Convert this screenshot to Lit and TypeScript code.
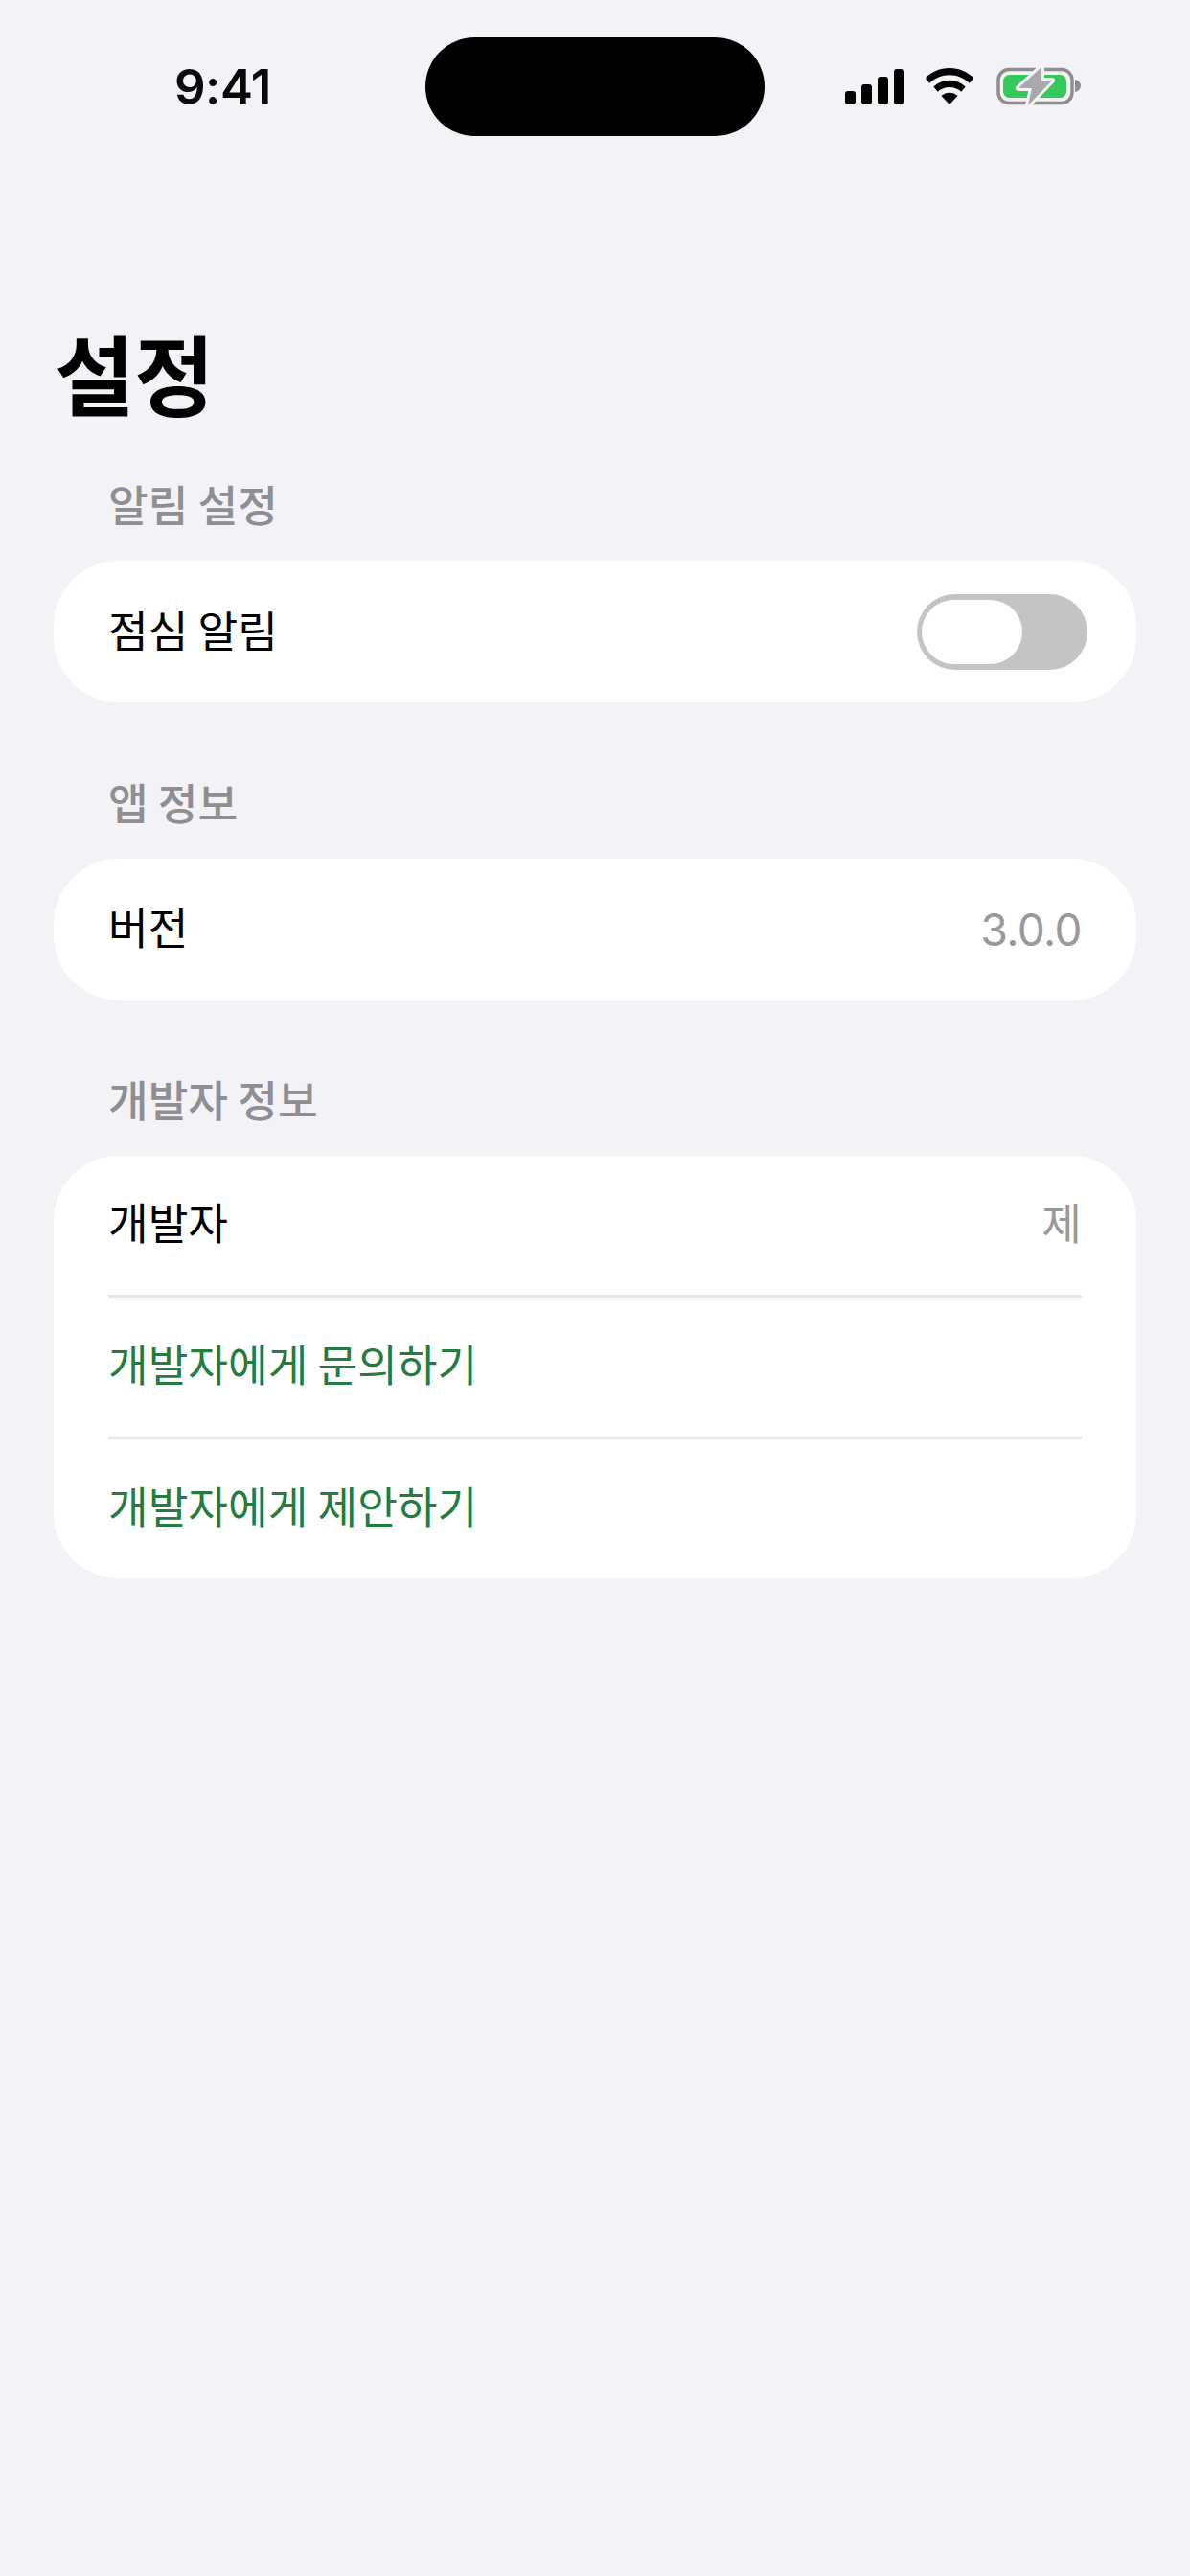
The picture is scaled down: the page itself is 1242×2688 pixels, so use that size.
import { LitElement, html, css } from "lit";
import { customElement } from "lit/decorators.js";

@customElement("app-root")
export class AppRoot extends LitElement {
  static styles = css`
    :host { display: block; width: 1242px; height: 2688px; background: #f2f2f7; font-family: "Noto Sans CJK KR", Inter, sans-serif; color: #000; overflow: hidden; }
    .status { display: flex; align-items: center; height: 103px; padding-top: 39px; }
    .time { width: 444px; box-sizing: border-box; padding-left: 182px; font: 600 51px/1 Inter, sans-serif; color: #0a0a0a; letter-spacing: -0.5px; }
    .island { width: 354px; height: 103px; border-radius: 52px; background: #000; }
    .icons { display: flex; align-items: center; margin-left: 84px; gap: 21px; padding-bottom: 1px; }
    .icons svg { display: block; overflow: visible; }
    .icons .battery { margin-left: 1px; }
    .page { padding: 0 56px; }
    h1 { margin: 186px 0 47px 1px; font-size: 90.6px; line-height: 120px; font-weight: 700; }
    .label { padding-left: 57px; padding-bottom: 4px; font-size: 45.3px; line-height: 60px; font-weight: 500; color: #8e8e93; }
    .section { margin-top: 72.5px; }
    .section.top { margin-top: 0; }
    .card { background: #fff; border-radius: 68px; margin-top: 26px; padding: 0 57px; }
    .row { display: flex; align-items: center; justify-content: space-between; height: 148px; font-size: 45.3px; }
    .row.multi { height: 145px; }
    .text { padding-bottom: 7px; }
    .row.multi .text { padding-bottom: 9px; }
    .sep { height: 3px; background: #e5e5ea; }
    .value { color: #999; }
    .num { font: 400 46px/1 Inter, sans-serif; color: #999; letter-spacing: -0.6px; }
    .green { color: #247c40; }
    .switch { box-sizing: border-box; width: 178px; height: 79px; border-radius: 40px; background: #c4c4c6; padding: 6px 5px; margin-right: -6px; display: flex; }
    .thumb { width: 105px; height: 67px; border-radius: 34px; background: #fff; }
  `;

  render() {
    return html`
      <div class="status">
        <div class="time">9:41</div>
        <div class="island"></div>
        <div class="icons">
          <svg width="61" height="37" viewBox="0 0 61 37">
            <rect x="0" y="23" width="11" height="14" rx="3" fill="#000" />
            <rect x="17" y="16" width="11" height="21" rx="3" fill="#000" />
            <rect x="34" y="8" width="11" height="29" rx="3" fill="#000" />
            <rect x="51" y="0" width="10" height="37" rx="3" fill="#000" />
          </svg>
          <svg width="54" height="38" viewBox="0 0 54 40">
            <path d="M27 0C16.500 0 7.500 4 0.500 11L5 16.500C11 10.700 18.500 7.500 27 7.500S43 10.700 49 16.500L53.500 11C46.500 4 37.500 0 27 0Z" fill="#000" />
            <path d="M27 13.500C20.500 13.500 14.500 16 9.500 20.500L14 26C18 22.500 22 21 27 21S36 22.500 40 26L44.500 20.500C39.500 16 33.500 13.500 27 13.500Z" fill="#000" />
            <path d="M27 27C23.500 27 20.500 28.200 18 30.500L27 40L36 30.500C33.500 28.200 30.500 27 27 27Z" fill="#000" />
          </svg>
          <svg class="battery" width="88" height="40" viewBox="0 0 88 40">
            <rect x="2" y="2.500" width="77" height="35" rx="11" fill="none" stroke="#8e8e8e" stroke-width="3.500" />
            <rect x="7" y="8" width="66" height="24" rx="6.500" fill="#34c759" />
            <path d="M82 13C85 13.500 88 16 88 19.500S85 25.500 82 26Z" fill="#8e8e8e" />
            <path d="M47 0L23 22H37L33 40L58 14H47Z" fill="#a8a8ad" stroke="#f2f2f7" stroke-width="6" stroke-linejoin="round" paint-order="stroke" />
          </svg>
        </div>
      </div>
      <div class="page">
        <h1>설정</h1>
        <div class="section top">
          <div class="label">알림 설정</div>
          <div class="card">
            <div class="row"><span class="text">점심 알림</span><div class="switch"><div class="thumb"></div></div></div>
          </div>
        </div>
        <div class="section">
          <div class="label">앱 정보</div>
          <div class="card">
            <div class="row"><span class="text">버전</span><span class="num">3.0.0</span></div>
          </div>
        </div>
        <div class="section">
          <div class="label">개발자 정보</div>
          <div class="card">
            <div class="row multi"><span class="text">개발자</span><span class="text value">제</span></div>
            <div class="sep"></div>
            <div class="row multi green"><span class="text">개발자에게 문의하기</span></div>
            <div class="sep"></div>
            <div class="row multi green"><span class="text">개발자에게 제안하기</span></div>
          </div>
        </div>
      </div>
    `;
  }
}
